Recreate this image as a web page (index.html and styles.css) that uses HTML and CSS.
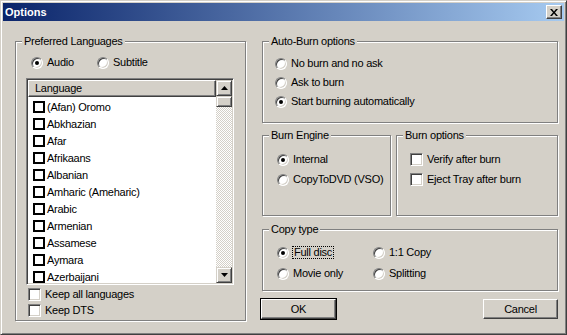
FILE: index.html
```html
<!DOCTYPE html>
<html>
<head>
<meta charset="utf-8">
<title>Options</title>
<link rel="stylesheet" href="styles.css">
</head>
<body>
<div class="window">
  <div class="titlebar">
    <span class="title">Options</span>
    <span class="close"><svg width="8" height="7" viewBox="0 0 8 7"><path d="M0 0h2l2 2.4L6 0h2L5 3.5 8 7H6L4 4.6 2 7H0l3-3.5z" fill="#000"/></svg></span>
  </div>
  <div class="content">
    <div class="group left-group">
      <div class="glabel">Preferred Languages</div>
      <div class="radio-row lang-type">
        <div class="opt w66"><span class="radio on"></span>Audio</div>
        <div class="opt"><span class="radio"></span>Subtitle</div>
      </div>
      <div class="list">
        <div class="list-main">
          <div class="list-head">Language</div>
          <div class="list-rows">
            <div class="list-row"><span class="lcheck"></span>(Afan) Oromo</div>
            <div class="list-row"><span class="lcheck"></span>Abkhazian</div>
            <div class="list-row"><span class="lcheck"></span>Afar</div>
            <div class="list-row"><span class="lcheck"></span>Afrikaans</div>
            <div class="list-row"><span class="lcheck"></span>Albanian</div>
            <div class="list-row"><span class="lcheck"></span>Amharic (Ameharic)</div>
            <div class="list-row"><span class="lcheck"></span>Arabic</div>
            <div class="list-row"><span class="lcheck"></span>Armenian</div>
            <div class="list-row"><span class="lcheck"></span>Assamese</div>
            <div class="list-row"><span class="lcheck"></span>Aymara</div>
            <div class="list-row"><span class="lcheck"></span>Azerbaijani</div>
          </div>
        </div>
        <div class="scrollbar">
          <div class="sbtn"><svg width="7" height="4" viewBox="0 0 7 4"><path d="M3.5 0L7 4H0z" fill="#000"/></svg></div>
          <div class="thumb"></div>
          <div class="track"></div>
          <div class="sbtn"><svg width="7" height="4" viewBox="0 0 7 4"><path d="M0 0h7L3.5 4z" fill="#000"/></svg></div>
        </div>
      </div>
      <div class="keep-rows">
        <div class="opt"><span class="check"></span>Keep all languages</div>
        <div class="opt"><span class="check"></span>Keep DTS</div>
      </div>
    </div>

    <div class="right">
      <div class="group auto-group">
        <div class="glabel">Auto-Burn options</div>
        <div class="stack">
          <div class="opt"><span class="radio"></span>No burn and no ask</div>
          <div class="opt"><span class="radio"></span>Ask to burn</div>
          <div class="opt"><span class="radio on"></span>Start burning automatically</div>
        </div>
      </div>

      <div class="burn-row">
        <div class="group engine-group">
          <div class="glabel">Burn Engine</div>
          <div class="stack">
            <div class="opt"><span class="radio on"></span>Internal</div>
            <div class="opt"><span class="radio"></span>CopyToDVD (VSO)</div>
          </div>
        </div>
        <div class="group bopt-group">
          <div class="glabel">Burn options</div>
          <div class="stack">
            <div class="opt"><span class="check"></span>Verify after burn</div>
            <div class="opt"><span class="check"></span>Eject Tray after burn</div>
          </div>
        </div>
      </div>

      <div class="group copy-group">
        <div class="glabel">Copy type</div>
        <div class="copy-grid">
          <div class="opt"><span class="radio on"></span><span class="focus">Full disc</span></div>
          <div class="opt"><span class="radio"></span>1:1 Copy</div>
          <div class="opt"><span class="radio"></span>Movie only</div>
          <div class="opt"><span class="radio"></span>Splitting</div>
        </div>
      </div>

      <div class="buttons">
        <div class="btn default">OK</div>
        <div class="btn">Cancel</div>
      </div>
    </div>
  </div>
</div>
</body>
</html>
```

FILE: styles.css
```css
* { box-sizing: border-box; }
html, body { margin: 0; padding: 0; }
body {
  width: 567px;
  height: 335px;
  overflow: hidden;
  background: #d4d0c8;
  font-family: "Liberation Sans", Arial, sans-serif;
  font-size: 11px;
  letter-spacing: -0.25px;
  color: #000;
}
.window {
  width: 567px;
  height: 335px;
  border: 1px solid;
  border-color: #d4d0c8 #404040 #404040 #d4d0c8;
  box-shadow: inset 1px 1px 0 #fff, inset -1px -1px 0 #808080;
  padding: 2px;
  background: #d4d0c8;
  display: flex;
  flex-direction: column;
}
.titlebar {
  height: 18px;
  flex: none;
  background: linear-gradient(to right, #0a246a, #a6caf0);
  display: flex;
  align-items: center;
  justify-content: space-between;
  padding: 0 2px 0 2px;
}
.title {
  color: #fff;
  font-weight: bold;
  letter-spacing: 0;
  line-height: 13px;
}
.close {
  width: 16px;
  height: 14px;
  background: #d4d0c8;
  border: 1px solid;
  border-color: #fff #404040 #404040 #fff;
  box-shadow: inset -1px -1px 0 #808080;
  display: flex;
  align-items: center;
  justify-content: center;
}
.close svg { display: block; }

.content {
  flex: 1;
  display: flex;
  padding: 20px 6px 0 12px;
  gap: 16px;
}
.group {
  border: 1px solid #808080;
  box-shadow: 1px 1px 0 #fff, inset 1px 1px 0 #fff;
}
.glabel {
  background: #d4d0c8;
  width: fit-content;
  margin: -7px 0 0 6px;
  padding: 0 2px;
  line-height: 13px;
  height: 13px;
}
.opt {
  display: flex;
  align-items: center;
  height: 13px;
  line-height: 13px;
  white-space: nowrap;
}
.radio {
  flex: none;
  width: 12px;
  height: 12px;
  margin-right: 4px;
  border-radius: 50%;
  background: #fff;
  border: 1px solid;
  border-color: #808080 #fff #fff #808080;
  box-shadow: inset 1px 1px 0 #404040, inset -1px -1px 0 #d4d0c8;
  display: flex;
  align-items: center;
  justify-content: center;
}
.radio.on::after {
  content: "";
  width: 4px;
  height: 4px;
  border-radius: 50%;
  background: #000;
}
.check {
  flex: none;
  width: 13px;
  height: 13px;
  margin-right: 4px;
  background: #fff;
  border: 1px solid;
  border-color: #808080 #fff #fff #808080;
  box-shadow: inset 1px 1px 0 #404040, inset -1px -1px 0 #d4d0c8;
}

/* left group */
.left-group {
  width: 231px;
  height: 280px;
  flex: none;
}
.radio-row {
  display: flex;
  margin-top: 8px;
  padding-left: 15px;
}
.w66 { width: 66px; }
.list {
  margin: 9px 0 0 10px;
  width: 208px;
  height: 207px;
  border: 1px solid;
  border-color: #808080 #fff #fff #808080;
  box-shadow: inset 1px 1px 0 #404040, inset -1px -1px 0 #d4d0c8;
  padding: 1px;
  display: flex;
}
.list-main {
  flex: 1;
  background: #fff;
  overflow: hidden;
}
.list-head {
  height: 17px;
  line-height: 15px;
  padding-left: 6px;
  background: #d4d0c8;
  border: 1px solid;
  border-color: #fff #404040 #404040 #fff;
  box-shadow: inset -1px -1px 0 #808080;
}
.list-rows { padding-top: 1px; }
.list-row {
  height: 17px;
  display: flex;
  align-items: center;
  padding-left: 5px;
  white-space: nowrap;
}
.lcheck {
  flex: none;
  width: 12px;
  height: 12px;
  border: 2px solid #000;
  background: #fff;
  margin-right: 2px;
}
.scrollbar {
  width: 16px;
  flex: none;
  display: flex;
  flex-direction: column;
  background: repeating-conic-gradient(#fff 0 25%, #d4d0c8 0 50%) 0 0 / 2px 2px;
}
.sbtn, .thumb {
  background: #d4d0c8;
  border: 1px solid;
  border-color: #d4d0c8 #404040 #404040 #d4d0c8;
  box-shadow: inset 1px 1px 0 #fff, inset -1px -1px 0 #808080;
}
.sbtn {
  height: 16px;
  flex: none;
  display: flex;
  align-items: center;
  justify-content: center;
}
.sbtn svg { display: block; }
.thumb { height: 11px; flex: none; }
.track { flex: 1; }
.keep-rows {
  margin-top: 3px;
  padding-left: 12px;
  display: flex;
  flex-direction: column;
  gap: 3px;
}

/* right column */
.right {
  width: 296px;
  flex: none;
  display: flex;
  flex-direction: column;
}
.stack {
  display: flex;
  flex-direction: column;
  gap: 7px;
}
.auto-group { height: 82px; }
.auto-group .stack { margin-top: 9px; padding-left: 12px; gap: 6px; }

.burn-row {
  display: flex;
  gap: 5px;
  margin-top: 12px;
  height: 81px;
}
.engine-group { width: 129px; flex: none; }
.engine-group .stack { margin-top: 11px; padding-left: 14px; }
.bopt-group { flex: 1; }
.bopt-group .stack { margin-top: 11px; padding-left: 13px; }

.copy-group { margin-top: 13px; height: 62px; }
.copy-grid {
  display: grid;
  grid-template-columns: 96px auto;
  row-gap: 8px;
  margin-top: 10px;
  padding-left: 14px;
}
.focus {
  border: 1px dotted #000;
  padding: 0 1px;
  margin-left: -1px;
  line-height: 11px;
}

.buttons {
  margin-top: 8px;
  display: flex;
  justify-content: space-between;
}
.btn {
  width: 75px;
  height: 20px;
  line-height: 18px;
  text-align: center;
  background: #d4d0c8;
  border: 1px solid;
  border-color: #fff #404040 #404040 #fff;
  box-shadow: inset -1px -1px 0 #808080;
}
.btn.default {
  outline: 1px solid #000;
  margin-left: -1px;
}
```
